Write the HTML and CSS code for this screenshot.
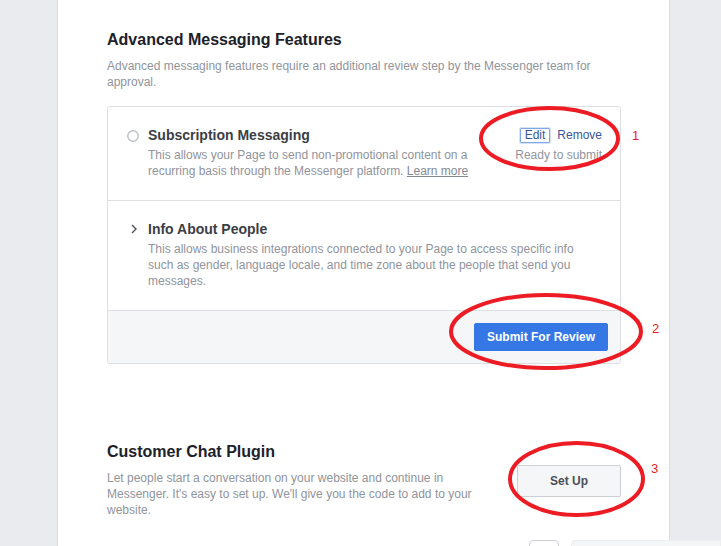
FILE: index.html
```html
<!DOCTYPE html>
<html lang="en">
<head>
<meta charset="utf-8">
<title>Messenger Platform</title>
<link rel="stylesheet" href="styles.css">
</head>
<body>
<div class="panel">
  <section class="adv">
    <h2 class="sec-title">Advanced Messaging Features</h2>
    <p class="sec-desc">Advanced messaging features require an additional review step by the Messenger team for approval.</p>
    <div class="feature-box">
      <div class="feature-row">
        <span class="feature-icon">
          <svg width="12" height="18" viewBox="0 0 12 18"><circle cx="6" cy="10" r="5.2" fill="none" stroke="#bec3c9" stroke-width="1.5"/></svg>
        </span>
        <div class="feature-body">
          <div class="feature-title">Subscription Messaging</div>
          <div class="feature-desc">This allows your Page to send non-promotional content on a recurring basis through the Messenger platform. <a class="learn" href="#">Learn more</a></div>
        </div>
        <div class="feature-status">
          <div class="actions"><button class="link-btn edit">Edit</button><button class="link-btn remove">Remove</button></div>
          <div class="status">Ready to submit</div>
        </div>
      </div>
      <div class="feature-row">
        <span class="feature-icon">
          <svg width="12" height="18" viewBox="0 0 12 18"><polyline points="5,5 9,9 5,13" fill="none" stroke="#4b4f56" stroke-width="1.4"/></svg>
        </span>
        <div class="feature-body">
          <div class="feature-title">Info About People</div>
          <div class="feature-desc">This allows business integrations connected to your Page to access specific info such as gender, language locale, and time zone about the people that send you messages.</div>
        </div>
      </div>
      <div class="feature-footer">
        <button class="btn-primary">Submit For Review</button>
      </div>
    </div>
  </section>

  <section class="chat">
    <div class="chat-text">
      <h2 class="sec-title">Customer Chat Plugin</h2>
      <p class="sec-desc">Let people start a conversation on your website and continue in Messenger. It's easy to set up. We'll give you the code to add to your website.</p>
    </div>
    <button class="btn-secondary">Set Up</button>
  </section>

  <div class="next-row"><span class="mini-box"></span></div>
</div>

<div class="chat-dock"></div>

<svg class="annotations" width="721" height="546" viewBox="0 0 721 546">
  <ellipse cx="549.5" cy="138.5" rx="68.5" ry="30.5" fill="none" stroke="#ed1c24" stroke-width="4"/>
  <ellipse cx="546" cy="331.5" rx="95" ry="36.5" fill="none" stroke="#ed1c24" stroke-width="4"/>
  <ellipse cx="576.5" cy="479" rx="66.5" ry="36" fill="none" stroke="#ed1c24" stroke-width="4"/>
  <text x="632" y="140" class="anno-num">1</text>
  <text x="652" y="333" class="anno-num">2</text>
  <text x="651" y="473" class="anno-num">3</text>
</svg>
</body>
</html>
```

FILE: styles.css
```css
* { box-sizing: border-box; }

html, body {
  margin: 0;
  height: 100%;
  overflow: hidden;
}

body {
  position: relative;
  background: #e9ebee;
  font-family: "Liberation Sans", Arial, Helvetica, sans-serif;
  color: #1d2129;
}

.panel {
  margin-left: 57px;
  width: 613px;
  min-height: 100%;
  background: #fff;
  border-left: 1px solid #dadde1;
  border-right: 1px solid #dadde1;
  padding: 30px 48px 0 49px;
}

.sec-title {
  margin: 0 0 8px;
  font-size: 16px;
  line-height: 20px;
  font-weight: bold;
  color: #1d2129;
}

.sec-desc {
  margin: 0;
  font-size: 12px;
  line-height: 16px;
  color: #90949c;
}

.adv .sec-desc { margin-bottom: 16px; }

.feature-box {
  border: 1px solid #dddfe2;
  border-radius: 3px;
  overflow: hidden;
}

.feature-row {
  display: flex;
  padding: 19px 18px 21px 19px;
  border-bottom: 1px solid #dddfe2;
}

.feature-icon {
  flex: none;
  width: 12px;
  height: 18px;
  margin-right: 9px;
  display: flex;
}

.feature-body {
  flex: 1;
  max-width: 440px;
}

.feature-title {
  font-size: 14px;
  line-height: 18px;
  font-weight: bold;
  color: #3b3e45;
}

.feature-desc {
  margin-top: 3px;
  font-size: 12px;
  line-height: 16px;
  color: #90949c;
}

.learn {
  color: #858a92;
  text-decoration: underline;
}

.feature-status {
  flex: none;
  margin-left: 24px;
  font-size: 12px;
  text-align: right;
}

.actions {
  display: flex;
  justify-content: flex-end;
  align-items: center;
  height: 18px;
}

.link-btn {
  font-family: "Liberation Sans", Arial, sans-serif;
  font-size: 12px;
  line-height: 13px;
  color: #365899;
  background: none;
  border: 0;
  padding: 0;
  margin: 0;
}

.link-btn.edit {
  border: 1px solid #7ea8ea;
  box-shadow: 0 0 0 1px #d4e2f8;
  padding: 0 4px;
  border-radius: 1px;
}

.link-btn.remove { margin-left: 7px; }

.status {
  margin-top: 3px;
  line-height: 16px;
  color: #90949c;
}

.feature-footer {
  display: flex;
  justify-content: flex-end;
  padding: 12px;
  background: #f5f6f7;
}

.btn-primary {
  height: 28px;
  padding: 0 12px;
  background: #3578e5;
  border: 1px solid #3578e5;
  border-radius: 2px;
  color: #fff;
  font-family: "Liberation Sans", Arial, sans-serif;
  font-size: 12px;
  font-weight: bold;
}

.chat {
  display: flex;
  align-items: center;
  margin-top: 78px;
}

.chat-text { width: 380px; }

.btn-secondary {
  margin-left: auto;
  margin-top: 2px;
  width: 104px;
  height: 32px;
  background: #f5f6f7;
  border: 1px solid #ccd0d5;
  border-radius: 2px;
  color: #4b4f56;
  font-family: "Liberation Sans", Arial, sans-serif;
  font-size: 12px;
  font-weight: bold;
}

.next-row {
  margin-top: 22px;
  padding-left: 422px;
}

.mini-box {
  display: block;
  width: 30px;
  height: 26px;
  border: 1px solid #ccd0d5;
  border-radius: 4px;
  background: #fff;
}

.chat-dock {
  position: absolute;
  left: 571px;
  top: 540px;
  right: 0;
  height: 30px;
  background: #f5f6f7;
  border: 1px solid #eceef0;
  border-radius: 4px 0 0 0;
}

.annotations {
  position: absolute;
  left: 0;
  top: 0;
  pointer-events: none;
}

.anno-num {
  font-family: "Liberation Sans", Arial, sans-serif;
  font-size: 13px;
  fill: #ed1c24;
}
```
